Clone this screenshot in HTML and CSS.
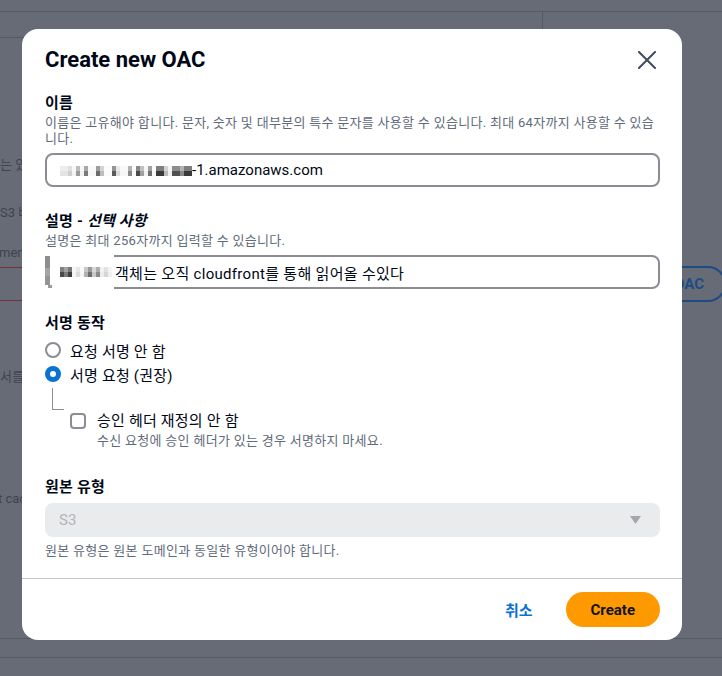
FILE: index.html
```html
<!DOCTYPE html>
<html lang="ko">
<head>
<meta charset="utf-8">
<title>Create new OAC</title>
<link rel="stylesheet" href="styles.css">
</head>
<body>
<div class="page">
  <div class="bg-top"><div class="bg-top-left"></div><div class="bg-top-right"></div></div>
  <div class="bg-content">
    <p class="bg-t t1">는 있습니다</p>
    <p class="bg-t t2">S3 버킷</p>
    <p class="bg-t t3">ment</p>
    <div class="bg-row">
      <div class="bg-input"></div>
      <button class="bg-btn">Create OAC</button>
    </div>
    <p class="bg-t t4">서를 선택</p>
    <p class="bg-t t5">t cache</p>
    <div class="bg-foot"></div>
  </div>
</div>

<div class="modal" role="dialog">
  <div class="modal-header">
    <h2 class="modal-title">Create new OAC</h2>
    <button class="close" aria-label="닫기">
      <svg width="18" height="18" viewBox="0 0 18 18"><path d="M1 1L17 17M17 1L1 17" stroke="#414d5c" stroke-width="2" fill="none" stroke-linecap="square"/></svg>
    </button>
  </div>

  <div class="modal-body">
    <div class="field">
      <div class="label">이름</div>
      <div class="desc">이름은 고유해야 합니다. 문자, 숫자 및 대부분의 특수 문자를 사용할 수 있습니다. 최대 64자까지 사용할 수 있습니다.</div>
      <div class="input"><span class="mosaic mosaic-name"></span><span class="latin">-1.amazonaws.com</span></div>
    </div>

    <div class="field">
      <div class="label">설명 - <em>선택 사항</em></div>
      <div class="desc">설명은 최대 256자까지 입력할 수 있습니다.</div>
      <div class="input desc-input">
        <span class="patch"><span class="patch-bar"></span><span class="patch-dot"></span><span class="mosaic mosaic-desc"></span></span>
        <span>객체는 오직 cloudfront를 통해 읽어올 수있다</span>
      </div>
    </div>

    <div class="field">
      <div class="label">서명 동작</div>
      <div class="options">
        <div class="radio-row"><span class="radio"></span><span>요청 서명 안 함</span></div>
        <div class="radio-row"><span class="radio on"></span><span>서명 요청 (권장)</span></div>
        <div class="tree"></div>
        <div class="sub">
          <span class="checkbox"></span>
          <div class="sub-text">
            <div class="sub-label">승인 헤더 재정의 안 함</div>
            <div class="desc">수신 요청에 승인 헤더가 있는 경우 서명하지 마세요.</div>
          </div>
        </div>
      </div>
    </div>

    <div class="field field-origin">
      <div class="label">원본 유형</div>
      <div class="select"><span class="latin">S3</span>
        <svg width="11" height="8" viewBox="0 0 11 8"><path d="M0 0H11L5.5 8Z" fill="#a6a6ae"/></svg>
      </div>
      <div class="desc desc-after">원본 유형은 원본 도메인과 동일한 유형이어야 합니다.</div>
    </div>
  </div>

  <div class="modal-footer">
    <button class="btn-link">취소</button>
    <button class="btn-primary">Create</button>
  </div>
</div>
</body>
</html>
```

FILE: styles.css
```css
* { box-sizing: border-box; }

html, body {
  margin: 0;
  width: 722px;
  height: 676px;
  overflow: hidden;
}

body {
  background: #676b75;
  font-family: Roboto, "Noto Sans CJK KR", sans-serif;
  color: #000716;
}

/* ---------- background page (dimmed) ---------- */
.bg-top {
  margin-top: 11px;
  height: 27px;
  display: flex;
  border-top: 1px solid #565a64;
}
.bg-top-left {
  width: 543px;
  border-right: 1px solid #565a64;
  border-bottom: 1px solid #565a64;
}
.bg-content { display: flex; flex-direction: column; }
.bg-t {
  margin: 0;
  font-size: 13px;
  line-height: 20px;
  color: #3f434d;
  white-space: nowrap;
}
.t1 { margin-top: 117px; }
.t2 { margin-top: 28px; }
.t3 { margin-top: 20px; margin-left: -1px; }
.t4 { margin-top: 65px; }
.t5 { margin-top: 102px; margin-left: -2px; }
.bg-row {
  margin-top: 3px;
  height: 36px;
  display: flex;
  align-items: center;
  gap: 14px;
  margin-right: -4px;
}
.bg-input {
  flex: 1;
  height: 34px;
  margin-left: -10px;
  border: 1px solid #7a2d36;
}
.bg-btn {
  height: 36px;
  padding: 0 20px;
  border: 2px solid #1f4b85;
  border-radius: 18px;
  background: transparent;
  color: #1f4b85;
  font: 700 15px Roboto, sans-serif;
  white-space: nowrap;
}
.bg-foot {
  margin-top: 129px;
  height: 20px;
  border-top: 1px solid #565a64;
  border-bottom: 1px solid #565a64;
}

/* ---------- modal ---------- */
.modal {
  position: fixed;
  top: 29px;
  left: 22px;
  width: 660px;
  background: #fff;
  border-radius: 16px;
}
.modal-header {
  display: flex;
  justify-content: space-between;
  align-items: center;
  padding: 17px 23px 0 23px;
}
.modal-title {
  margin: 0;
  font-size: 22px;
  line-height: 28px;
  font-weight: 700;
  color: #000716;
}
.close {
  width: 24px;
  height: 24px;
  padding: 3px;
  border: 0;
  background: none;
  display: flex;
}
.modal-body {
  padding: 19px 22px 19px 23px;
}
.field + .field { margin-top: 24px; }
.field-origin.field { margin-top: 28px; }

.label {
  font-size: 15px;
  line-height: 20px;
  font-weight: 700;
  color: #000716;
  letter-spacing: 0.2px;
}
.label em { font-style: italic; }
.desc {
  margin-top: 2px;
  font-size: 13px;
  line-height: 16px;
  letter-spacing: 0.3px;
  color: #5f6b7a;
}
.desc-after { margin-top: 6px; }

.input {
  margin-top: 6px;
  height: 34px;
  border: 2px solid #8c8c94;
  border-radius: 8px;
  padding: 0 13px;
  display: flex;
  align-items: center;
  font-size: 15px;
  letter-spacing: 0.3px;
  color: #000716;
  white-space: nowrap;
}
.latin { letter-spacing: 0; }
.mosaic { display: inline-block; height: 10px; }
.mosaic-name {
  width: 132px;
  margin-top: 2px;
  background:
    linear-gradient(180deg, rgba(255,255,255,.35) 0 50%, rgba(255,255,255,0) 50%),
    linear-gradient(90deg,
      #e4e4e4 0 8px, #cfcfcf 8px 12px, #f4f4f4 12px 16px, #9a9a9a 16px 20px,
      #f2f2f2 20px 24px, #7a7a7a 24px 28px, #f6f6f6 28px 36px, #6a6a6a 36px 40px,
      #bdbdbd 40px 44px, #fafafa 44px 52px, #5a5a5a 52px 56px, #dcdcdc 56px 60px,
      #f6f6f6 60px 68px, #8a8a8a 68px 72px, #fafafa 72px 76px, #4a4a4a 76px 80px,
      #a0a0a0 80px 84px, #f2f2f2 84px 88px, #6f6f6f 88px 92px, #fafafa 92px 96px,
      #3a3a3a 96px 104px, #bbbbbb 104px 108px, #f0f0f0 108px 112px, #505050 112px 120px,
      #8a8a8a 120px 124px, #3a3a3a 124px 132px);
}
.desc-input {
  position: relative;
  padding-left: 68px;
}
.patch {
  position: absolute;
  left: -2px;
  top: -2px;
  width: 69px;
  height: 34px;
  background: #fff;
}
.patch-bar {
  position: absolute;
  left: 0;
  top: 1px;
  width: 5px;
  height: 29px;
  background: linear-gradient(180deg, #8e8e8e 0 40%, #a4a4a4 40% 70%, #949494 70%);
}
.patch-dot {
  position: absolute;
  left: 3px;
  top: 30px;
  width: 4px;
  height: 3px;
  background: #9a9a9a;
}
.mosaic-desc {
  position: absolute;
  left: 15px;
  top: 12px;
  width: 52px;
  background:
    linear-gradient(180deg, rgba(255,255,255,.3) 0 50%, rgba(255,255,255,0) 50%),
    linear-gradient(90deg,
      #4a4a4a 0 4px, #7a7a7a 4px 8px, #3e3e3e 8px 12px, #f4f4f4 12px 16px,
      #dcdcdc 16px 20px, #f6f6f6 20px 24px, #b0b0b0 24px 28px, #6e6e6e 28px 32px,
      #c8c8c8 32px 36px, #8a8a8a 36px 40px, #ececec 40px 44px, #d6d6d6 44px 48px,
      #f0f0f0 48px 52px);
}

.options { margin-top: 5px; }
.radio-row {
  height: 24px;
  display: flex;
  align-items: center;
  gap: 9px;
  font-size: 15px;
  letter-spacing: 0.2px;
}
.radio {
  width: 16px;
  height: 16px;
  border-radius: 50%;
  border: 2px solid #8c8c94;
  flex: none;
}
.radio.on { border: 5px solid #0972d3; }
.tree {
  margin: 2px 0 0 7px;
  width: 12px;
  height: 22px;
  border-left: 1px solid #8c8c94;
  border-bottom: 1px solid #8c8c94;
}
.sub {
  margin: 1px 0 0 25px;
  display: flex;
  align-items: flex-start;
  gap: 11px;
}
.checkbox {
  margin-top: 2px;
  width: 16px;
  height: 16px;
  border: 2px solid #8c8c94;
  border-radius: 4px;
  flex: none;
}
.sub-label { font-size: 15px; line-height: 20px; letter-spacing: 0.2px; }

.select {
  margin-top: 6px;
  height: 34px;
  border-radius: 8px;
  background: #e9ebed;
  padding: 0 19px 0 14px;
  display: flex;
  align-items: center;
  justify-content: space-between;
  font-size: 15px;
  color: #b4b4bb;
}

.modal-footer {
  border-top: 1px solid #c6c6cd;
  padding: 13px 22px 13px;
  display: flex;
  justify-content: flex-end;
  align-items: center;
  gap: 13px;
}
.btn-link {
  height: 35px;
  padding: 0 20px;
  border: 0;
  background: none;
  color: #0972d3;
  font: 700 15px Roboto, "Noto Sans CJK KR", sans-serif;
}
.btn-primary {
  height: 35px;
  padding: 0 25px;
  border: 0;
  border-radius: 18px;
  background: #ff9900;
  color: #0f141a;
  font: 700 15px Roboto, sans-serif;
}
```
